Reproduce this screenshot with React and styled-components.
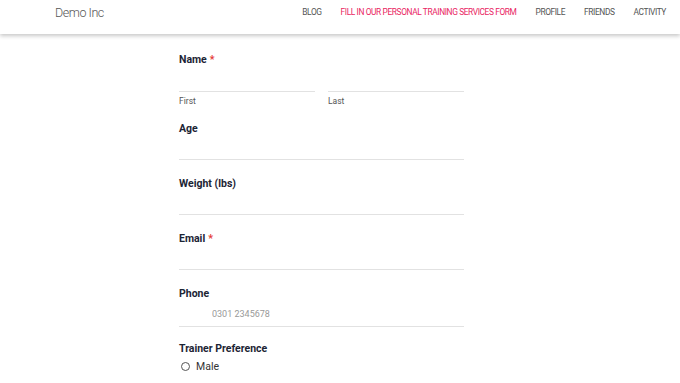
import React from "react";
import styled, { createGlobalStyle } from "styled-components";

const GlobalStyle = createGlobalStyle`
  body {
    margin: 0;
    background: #fff;
    font-family: Roboto, "Liberation Sans", sans-serif;
  }
`;

const Header = styled.header`
  height: 34px;
  display: flex;
  align-items: flex-start;
  justify-content: space-between;
  padding: 0 14px 0 55px;
  background: #fff;
  box-shadow: 0 2px 4px rgba(0, 0, 0, 0.22);
  position: relative;
`;

const Logo = styled.div`
  font-size: 12.5px;
  font-weight: 300;
  letter-spacing: -0.45px;
  color: #555;
  line-height: 25px;
`;

const Nav = styled.nav`
  display: flex;
  gap: 19px;
`;

const NavLink = styled.a`
  font-size: 8.4px;
  letter-spacing: -0.4px;
  line-height: 24px;
  text-transform: uppercase;
  text-decoration: none;
  color: ${(p) => (p.$active ? "#e91e63" : "#555")};
`;

const Main = styled.main`
  padding: 19px 0 0 179px;
`;

const Form = styled.form`
  width: 285px;
  display: flex;
  flex-direction: column;
  gap: 17px;
`;

const Field = styled.div`
  display: flex;
  flex-direction: column;
  margin-top: ${(p) => p.$mt || 0}px;
`;

const Label = styled.label`
  font-size: 10.5px;
  font-weight: 700;
  line-height: 14px;
  color: #1c2434;
`;

const Req = styled.span`
  color: #e53935;
  margin-left: 3px;
`;

const Row = styled.div`
  display: flex;
  gap: 13px;
`;

const Col = styled.div`
  flex: 1;
  display: flex;
  flex-direction: column;
`;

const Input = styled.input`
  height: ${(p) => p.$h || 24}px;
  box-sizing: border-box;
  border: none;
  border-bottom: 1px solid #e2e2e2;
  outline: none;
  padding: 0 0 0 ${(p) => p.$indent || 0}px;
  font-family: inherit;
  font-size: 9px;
  color: #333;
  background: transparent;

  &::placeholder {
    color: #999;
  }
`;

const Sub = styled.span`
  font-size: 8.5px;
  line-height: 8px;
  margin-top: 5px;
  color: #555;
`;

const Radio = styled.label`
  display: flex;
  align-items: center;
  gap: 6px;
  margin-top: 4px;
  padding-left: 2px;
  font-size: 10.5px;
  color: #333;
`;

const Dot = styled.span`
  width: 7px;
  height: 7px;
  border: 1px solid #555;
  border-radius: 50%;
`;

const links = [
  "Blog",
  "Fill in our personal training services form",
  "Profile",
  "Friends",
  "Activity",
];

export default function App() {
  return (
    <>
      <GlobalStyle />
      <Header>
        <Logo>Demo Inc</Logo>
        <Nav>
          {links.map((l, i) => (
            <NavLink key={l} href="#" $active={i === 1}>
              {l}
            </NavLink>
          ))}
        </Nav>
      </Header>
      <Main>
        <Form>
          <Field>
            <Label>
              Name<Req>*</Req>
            </Label>
            <Row>
              <Col>
                <Input $h={25} />
                <Sub>First</Sub>
              </Col>
              <Col>
                <Input $h={25} />
                <Sub>Last</Sub>
              </Col>
            </Row>
          </Field>
          <Field>
            <Label>Age</Label>
            <Input />
          </Field>
          <Field>
            <Label>Weight (lbs)</Label>
            <Input />
          </Field>
          <Field>
            <Label>
              Email<Req>*</Req>
            </Label>
            <Input />
          </Field>
          <Field>
            <Label>Phone</Label>
            <Input $h={26} $indent={33} placeholder="0301 2345678" />
          </Field>
          <Field $mt={-2}>
            <Label>Trainer Preference</Label>
            <Radio>
              <Dot />
              Male
            </Radio>
          </Field>
        </Form>
      </Main>
    </>
  );
}
